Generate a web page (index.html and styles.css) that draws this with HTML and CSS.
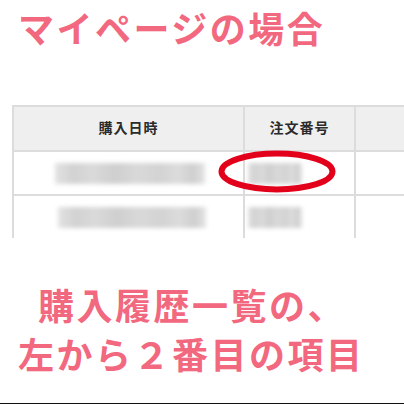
FILE: index.html
```html
<!DOCTYPE html>
<html lang="ja">
<head>
<meta charset="utf-8">
<link rel="stylesheet" href="styles.css">
</head>
<body>
<div class="page">
  <h1 class="title">マイページの場合</h1>
  <div class="table-area">
    <div class="grid">
      <div class="cell head">購入日時</div>
      <div class="cell head">注文番号</div>
      <div class="cell head"></div>
      <div class="cell"><span class="blur wide"></span></div>
      <div class="cell left"><span class="blur narrow"></span></div>
      <div class="cell"></div>
      <div class="cell"><span class="blur wide second"></span></div>
      <div class="cell left"><span class="blur narrow"></span></div>
      <div class="cell"></div>
    </div>
    <svg class="circle" width="124" height="46" viewBox="0 0 124 46">
      <ellipse cx="62" cy="22.5" rx="55.5" ry="18" fill="none" stroke="#e2001b" stroke-width="6"/>
    </svg>
  </div>
  <div class="caption">
    <p class="line first">購入履歴一覧の、</p>
    <p class="line">左から２番目の項目</p>
  </div>
</div>
</body>
</html>
```

FILE: styles.css
```css
html, body {
  margin: 0;
  padding: 0;
  background: #fff;
}
.page {
  width: 404px;
  height: 404px;
  box-sizing: border-box;
  border-bottom: 1px solid #111;
  overflow: hidden;
  display: flex;
  flex-direction: column;
  font-family: "Noto Sans CJK JP", "Noto Sans", sans-serif;
}
.title {
  margin: 8px 0 0 18px;
  font-size: 36px;
  line-height: 38px;
  font-weight: 700;
  letter-spacing: 2.5px;
  color: #f2687f;
}
.table-area {
  position: relative;
  margin: 59px 0 0 12px;
  height: 133px;
  overflow: hidden;
}
.grid {
  display: grid;
  grid-template-columns: 231px 111px 200px;
  grid-template-rows: 45px 44px 44px;
  border-top: 2px solid #dcdcdc;
  border-left: 2px solid #dcdcdc;
  width: max-content;
}
.cell {
  border-right: 2px solid #dcdcdc;
  border-bottom: 2px solid #dcdcdc;
  display: flex;
  align-items: center;
  justify-content: center;
  font-size: 14px;
  font-weight: 700;
  letter-spacing: 1px;
  color: #2b2b2b;
}
.head {
  padding-bottom: 3px;
  box-sizing: border-box;
  background: #efefef;
}
.cell.left {
  justify-content: flex-start;
  padding-left: 3px;
}
.blur {
  display: block;
  height: 21px;
  background: linear-gradient(90deg, #e2e2e2 0%, #d2d2d2 12%, #dadada 25%, #cfcfcf 40%, #d9d9d9 55%, #d3d3d3 70%, #dcdcdc 82%, #cfcfcf 92%, #e4e4e4 100%);
  filter: blur(2px);
}
.blur.wide {
  width: 150px;
  margin-left: 2px;
}
.blur.second {
  width: 148px;
  margin-left: 6px;
}
.blur.narrow {
  width: 54px;
}
.circle {
  position: absolute;
  left: 203px;
  top: 44px;
}
.caption {
  margin-top: 42px;
}
.line {
  margin: 0 0 0 18px;
  font-size: 36px;
  line-height: 49px;
  font-weight: 700;
  letter-spacing: 2.5px;
  color: #f2687f;
}
.line.first {
  margin-left: 38px;
}
```
